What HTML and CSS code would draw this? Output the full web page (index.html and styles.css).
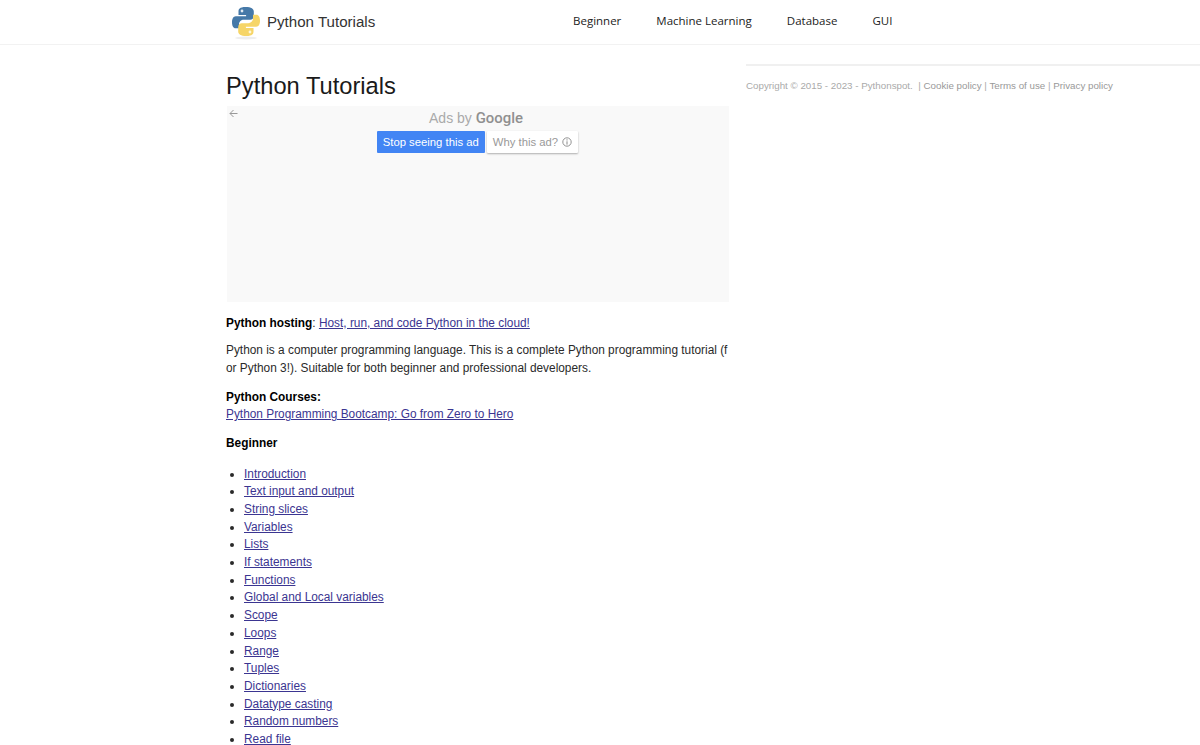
FILE: index.html
```html
<!DOCTYPE html>
<html>
<head>
<meta charset="utf-8">
<title>Python Tutorials</title>
<link rel="stylesheet" href="styles.css">
</head>
<body>
	<div class="nav">
		<a href="#" class="brand">
			<svg class="logo" width="30" height="34" viewBox="0 0 30 34">
				<ellipse cx="15" cy="32" rx="11" ry="1.500" fill="#eee"/>
				<path fill="#4679a8" d="M14.500 1C8.500 1 7.500 3.300 7.500 5.500V9h7.600v1.200H4.800C2.200 10.200 1 13 1 16.200c0 3.400 1.200 6 3.600 6H8v-3.800c0-2.600 2.200-4.600 4.800-4.600h6.400c2 0 3.600-1.700 3.600-3.800V5.500C22.800 3 20.500 1 14.500 1z"/>
				<circle cx="11" cy="5" r="1.400" fill="#dfe8f0"/>
				<path fill="#f6d567" d="M15.500 30C21.500 30 22.500 27.700 22.500 25.500V22h-7.600v-1.200h10.300c2.600 0 3.800-2.800 3.800-6 0-3.400-1.200-6-3.600-6H22v3.800c0 2.600-2.200 4.600-4.800 4.600h-6.400c-2 0-3.600 1.700-3.600 3.800v4.500C7.200 28 9.500 30 15.500 30z"/>
				<circle cx="19" cy="26" r="1.400" fill="#fff6d8"/>
			</svg>
			<span>Python Tutorials</span>
		</a>
		<ul class="menu">
			<li><a href="#">Beginner</a></li>
			<li><a href="#">Machine Learning</a></li>
			<li><a href="#">Database</a></li>
			<li><a href="#">GUI</a></li>
		</ul>
	</div>

	<div class="wrap">
		<div class="main">
			<h1>Python Tutorials</h1>
			<div class="ad">
				<svg class="back" width="9" height="9" viewBox="0 0 9 9">
					<path fill="none" stroke="#999" stroke-width="1" d="M8.500 4.500H1M4.500 1L1 4.500 4.500 8"/>
				</svg>
				<div class="ad_by">Ads by <b>Google</b></div>
				<div class="ad_btns">
					<a href="#" class="stop">Stop seeing this ad</a>
					<a href="#" class="why">Why this ad?
						<svg width="10" height="10" viewBox="0 0 10 10">
							<circle cx="5" cy="5" r="4.200" fill="none" stroke="#888" stroke-width="0.900"/>
							<path stroke="#888" stroke-width="1" d="M5 4.300V7.600M5 2.300V3.500"/>
						</svg>
					</a>
				</div>
			</div>

			<p class="hosting"><b>Python hosting</b>: <a href="#">Host, run, and code Python in the cloud!</a></p>
			<p class="intro">Python is a computer programming language. This is a complete Python programming tutorial (for Python 3!). Suitable for both beginner and professional developers.</p>
			<p><b>Python Courses:</b><br><a href="#">Python Programming Bootcamp: Go from Zero to Hero</a></p>
			<p><b>Beginner</b></p>
			<ul class="links">
				<li><a href="#">Introduction</a></li>
				<li><a href="#">Text input and output</a></li>
				<li><a href="#">String slices</a></li>
				<li><a href="#">Variables</a></li>
				<li><a href="#">Lists</a></li>
				<li><a href="#">If statements</a></li>
				<li><a href="#">Functions</a></li>
				<li><a href="#">Global and Local variables</a></li>
				<li><a href="#">Scope</a></li>
				<li><a href="#">Loops</a></li>
				<li><a href="#">Range</a></li>
				<li><a href="#">Tuples</a></li>
				<li><a href="#">Dictionaries</a></li>
				<li><a href="#">Datatype casting</a></li>
				<li><a href="#">Random numbers</a></li>
				<li><a href="#">Read file</a></li>
			</ul>
		</div>
		<div class="side">
			<hr>
			<p class="copy">Copyright © 2015 - 2023 - Pythonspot. &nbsp;| <a href="#">Cookie policy</a> | <a href="#">Terms of use</a> | <a href="#">Privacy policy</a></p>
		</div>
	</div>
</body>
</html>
```

FILE: styles.css
```css
*{ padding:0; margin:0; box-sizing:border-box;}
html, body{ height:745px; overflow:hidden;}
body{ background:#fff; font-family:"Liberation Sans", Arial, sans-serif; font-size:11.870px; line-height:17.7px; color:#2a2a2a;}
a{ color:#3b3591;}

.nav{ height:45px; border-bottom:1px solid #f2f2f2; display:flex; align-items:center; padding-left:231px; padding-bottom:1px;}
.brand{ display:flex; align-items:center; width:342px; text-decoration:none; color:#333; font-size:15.100px;}
.logo{ margin-right:6px; margin-top:3px;}
.menu{ display:flex; gap:35px; list-style:none;}
.menu a{ color:#222; text-decoration:none; font-family:"Open Sans", sans-serif; font-size:11.500px;}

.wrap{ display:flex; padding-left:226px;}
.main{ width:503px;}
.main h1{ font-size:23.700px; font-weight:normal; line-height:28px; color:#1a1a1a; margin-top:27px; margin-bottom:6px;}
.main p{ margin-bottom:11px; color:#2a2a2a;}
.main p.hosting{ margin-bottom:10px;}
.main p b{ color:#000;}

.ad{ position:relative; height:196px; background:#f9f9f9; margin-bottom:12.500px; margin-left:1px; text-align:center;}
.back{ position:absolute; left:2px; top:3px;}
.ad_by{ padding-top:3px; padding-right:4px; font-size:14px; line-height:18px; color:#aaa;}
.ad_by b{ font-family:Roboto, sans-serif; font-weight:500; font-size:14.900px; color:#909090;}
.ad_btns{ display:flex; justify-content:center; gap:2px; margin-top:4px; padding-right:1px; font-size:11.300px;}
.ad_btns a{ height:22px; line-height:22px; padding:0 6px; text-decoration:none; border-radius:1px;}
.stop{ background:#4285f4; color:#fff;}
.why{ background:#fff; color:#999; box-shadow:0 1px 2px rgba(0,0,0,0.3);}
.why svg{ vertical-align:-1px; margin-left:1px;}

.intro{ width:503px; word-break:break-all;}
.links{ padding-left:18px; margin-top:12.800px;}

.side{ margin-left:17px; flex:1; padding-top:19px;}
.side hr{ border:0; border-top:2px solid #f0f0f0;}
.side .copy{ margin-top:12px; font-size:9.780px; line-height:15px; color:#aaa;}
.side .copy a{ color:#999; text-decoration:none;}
```
